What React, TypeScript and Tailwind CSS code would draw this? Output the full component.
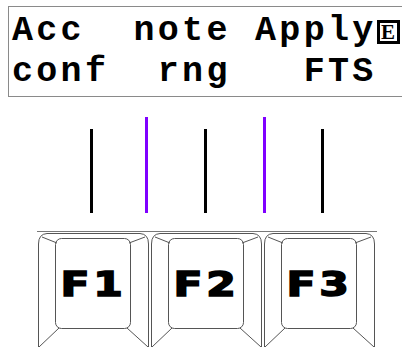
const mono = "font-['Liberation_Mono','Courier_New',monospace]"

function Display() {
  return (
    <div
      className={`ml-2 mt-[6px] w-[420px] border border-[#8a8a8a] pl-[3px] pt-[4px] pb-[3px] ${mono} font-bold text-[35px] tracking-[3.3px] leading-[41px] text-black`}
    >
      <div className="flex items-start whitespace-pre">
        <span>Acc  note Apply</span>
        <span className="mt-[9px] shrink-0 w-[23px] h-[24px] border-[3px] border-black text-center font-['Liberation_Serif',serif] text-[21px] tracking-normal leading-[18px] font-bold">
          E
        </span>
      </div>
      <div className="whitespace-pre">conf  rng   FTS</div>
    </div>
  )
}

function Markers() {
  return (
    <div className="mt-[20px] h-[96px] pl-[90px] flex items-end">
      <div className="w-[3px] h-[84px] bg-black" />
      <div className="ml-[52px] w-[3px] h-[96px] bg-[#7f00ff]" />
      <div className="ml-[56px] w-[3px] h-[84px] bg-black" />
      <div className="ml-[56px] w-[3px] h-[96px] bg-[#7f00ff]" />
      <div className="ml-[55px] w-[3px] h-[84px] bg-black" />
    </div>
  )
}

function KeyShape() {
  return (
    <svg
      className="absolute inset-0"
      width="113"
      height="116"
      viewBox="0 0 113 116"
      fill="none"
      stroke="#555"
      strokeWidth="1"
    >
      <path d="M1.5 116 L1.5 12 Q1.5 2 10 1.5 L103 1.5 Q111.5 2 111.5 12 L111.5 116" />
      <rect x="18.5" y="6.5" width="75" height="90" rx="6" />
      <path d="M20 11 L5 5 M92 11 L108 5 M22 96 L2 115 M90 96 L111 115" />
    </svg>
  )
}

function Key({ label }: { label: string }) {
  return (
    <div className="relative w-[113px] h-[116px]">
      <KeyShape />
      <div className="relative ml-[18.5px] mt-[6.5px] w-[75px] h-[90px] flex items-center justify-center">
        <span className="font-['DejaVu_Sans',sans-serif] font-bold text-[34px] leading-none tracking-[3px] scale-x-[1.25] [-webkit-text-stroke:1.6px_black] text-black">
          {label}
        </span>
      </div>
    </div>
  )
}

export default function App() {
  return (
    <div className="w-[402px] h-[347px] overflow-hidden bg-white">
      <Display />
      <Markers />
      <div className="mt-[18px] ml-[37px] w-[340px] h-px bg-[#777]" />
      <div className="flex ml-[37px]">
        <Key label="F1" />
        <Key label="F2" />
        <Key label="F3" />
      </div>
    </div>
  )
}
